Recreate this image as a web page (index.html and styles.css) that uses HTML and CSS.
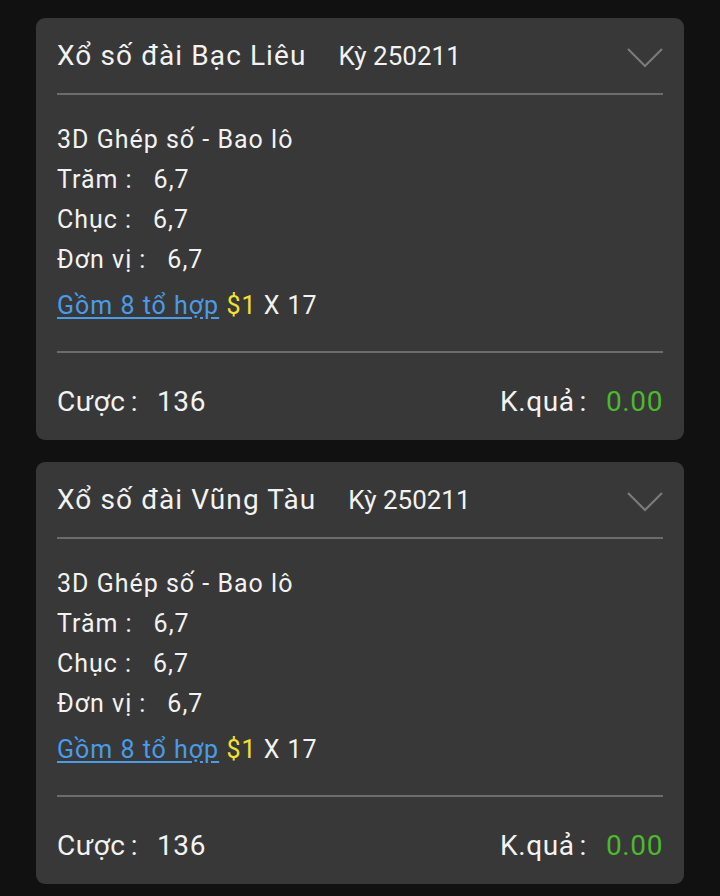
FILE: index.html
```html
<!DOCTYPE html>
<html lang="vi">

<head>
    <meta charset="UTF-8">
    <meta name="viewport" content="width=device-width, initial-scale=1.0">
    <title>Lịch sử cược</title>
    <link rel="stylesheet" href="styles.css">
</head>

<body>
    <div class="list">
        <!-- Bac Lieu -->
        <div class="card">
            <div class="card-head">
                <span class="title">Xổ số đài Bạc Liêu</span>
                <span class="issue">Kỳ 250211</span>
                <svg class="chevron" width="38" height="22" viewBox="0 0 38 22">
                    <polyline points="2,2 19,19 36,2" fill="none" stroke="#7a7a7a" stroke-width="2.2" />
                </svg>
            </div>
            <div class="card-body">
                <div class="line">3D Ghép số - Bao lô</div>
                <div class="line">Trăm<span class="colon">:</span>6,7</div>
                <div class="line">Chục<span class="colon">:</span>6,7</div>
                <div class="line">Đơn vị<span class="colon">:</span>6,7</div>
                <div class="line combo"><a href="#" class="link">Gồm 8 tổ hợp</a> <span class="money">$1</span> X 17</div>
            </div>
            <div class="card-foot">
                <span>Cược<span class="colon">:</span>136</span>
                <span>K.quả<span class="colon">:</span><span class="win">0.00</span></span>
            </div>
        </div>

        <!-- Vung Tau -->
        <div class="card">
            <div class="card-head">
                <span class="title">Xổ số đài Vũng Tàu</span>
                <span class="issue">Kỳ 250211</span>
                <svg class="chevron" width="38" height="22" viewBox="0 0 38 22">
                    <polyline points="2,2 19,19 36,2" fill="none" stroke="#7a7a7a" stroke-width="2.2" />
                </svg>
            </div>
            <div class="card-body">
                <div class="line">3D Ghép số - Bao lô</div>
                <div class="line">Trăm<span class="colon">:</span>6,7</div>
                <div class="line">Chục<span class="colon">:</span>6,7</div>
                <div class="line">Đơn vị<span class="colon">:</span>6,7</div>
                <div class="line combo"><a href="#" class="link">Gồm 8 tổ hợp</a> <span class="money">$1</span> X 17</div>
            </div>
            <div class="card-foot">
                <span>Cược<span class="colon">:</span>136</span>
                <span>K.quả<span class="colon">:</span><span class="win">0.00</span></span>
            </div>
        </div>
    </div>
</body>

</html>
```

FILE: styles.css
```css
/* General Styles */

body {
    font-family: Roboto, 'Noto Sans', sans-serif;
    margin: 0;
    padding: 0;
    background: #111111;
    color: #f2f2f2;
}

.list {
    display: flex;
    flex-direction: column;
    gap: 22px;
    padding: 18px 36px 0 36px;
}

.card {
    background: #383838;
    border-radius: 9px;
    padding: 0 21px;
}

.card-head {
    display: flex;
    align-items: center;
    height: 75px;
    border-bottom: 2px solid #6c6c6c;
}

.title {
    font-size: 28px;
    letter-spacing: 1.1px;
}

.issue {
    font-size: 26px;
    margin-left: 32px;
}

.chevron {
    margin-left: auto;
    margin-right: -1px;
    margin-top: 4px;
}

.card-body {
    padding: 25px 0 25px 0;
    border-bottom: 2px solid #6c6c6c;
    font-size: 25px;
    letter-spacing: 1px;
}

.line {
    line-height: 40px;
}

.combo {
    margin-top: 6px;
}

.colon {
    margin: 0 21px 0 7px;
}

.link {
    color: #4a9be8;
    text-decoration: underline;
    text-underline-offset: 3px;
}

.money {
    color: #f2e032;
}

.card-foot {
    display: flex;
    justify-content: space-between;
    padding: 29px 0 18px 0;
    line-height: 40px;
    font-size: 28px;
    letter-spacing: 0.6px;
}

.card-foot .colon {
    margin: 0 19px 0 5px;
}

.win {
    color: #4cb82e;
}
```
